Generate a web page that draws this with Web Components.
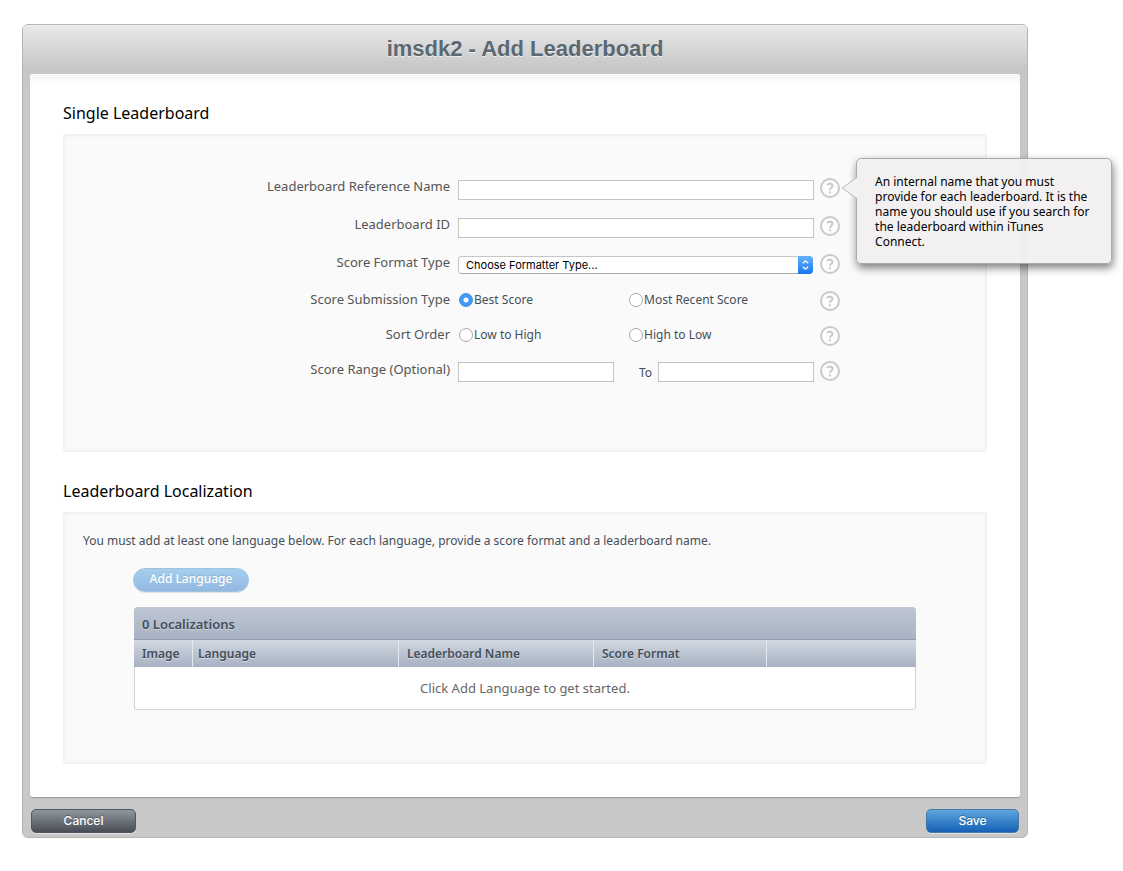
<!DOCTYPE html>
<html lang="en">
<head>
<meta charset="utf-8">
<meta name="viewport" content="width=device-width, initial-scale=1">
<title>imsdk2 - Add Leaderboard</title>
<style>
body { margin: 0; padding: 24px 95px 32px 22px; background: #fff; color: #444f5a; font: 12px/16px "Noto Sans", sans-serif; }
</style>
</head>
<body>
<lb-window>
  <span slot="title">imsdk2 - Add Leaderboard</span>
  <lb-section>
    <span slot="heading">Single Leaderboard</span>
    <lb-form></lb-form>
  </lb-section>
  <lb-section>
    <span slot="heading">Leaderboard Localization</span>
    <lb-localizations></lb-localizations>
  </lb-section>
  <lb-button slot="actions">Cancel</lb-button>
  <lb-button slot="actions" primary>Save</lb-button>
</lb-window>
<script>
const define = (name, html) => customElements.define(name, class extends HTMLElement {
  constructor() {
    super();
    const template = document.createElement('template');
    template.innerHTML = html;
    this.attachShadow({ mode: 'open' }).append(template.content.cloneNode(true));
  }
});

define('lb-window', `
<style>
:host { display: block; border: 1px solid #b5b5b5; border-radius: 6px; background: #c8c8c8; }
header { padding: 11px 0 12px; border-radius: 5px 5px 0 0; background: linear-gradient(#e9e9e9, #c6c6c6 90%); box-shadow: inset 0 1px #f2f2f2; }
h1 { margin: 0; text-align: center; font: bold 22px/26px "Liberation Sans", sans-serif; color: #5a6872; text-shadow: 0 1px #eee; }
main { margin: 0 7px; padding: 0 33px 33px; border-radius: 3px; background: linear-gradient(#f5f5f5, #fff 12px); box-shadow: 0 1px 1px #999, inset 0 1px #fff; }
footer { display: flex; justify-content: space-between; padding: 12px 8px 4px; }
</style>
<header><h1><slot name="title"></slot></h1></header>
<main><slot></slot></main>
<footer><slot name="actions"></slot></footer>`);

define('lb-section', `
<style>
:host { display: block; }
h2 { margin: 0; padding: 28px 0 10px; font-size: 16px; line-height: 22px; font-weight: 400; color: #000; }
section { border: 1px solid #f0f0f0; border-radius: 3px; background: #fafafa; box-shadow: inset 0 0 4px #eee; }
</style>
<h2><slot name="heading"></slot></h2>
<section><slot></slot></section>`);

define('lb-button', `
<style>
:host { display: block; }
button { display: block; width: 105px; height: 24px; padding: 0; border: 1px solid #50565e; border-radius: 5px; background: linear-gradient(#91979e, #484d55); box-shadow: 0 1px #dfe2e5; color: #fff; font: 500 12px/22px Inter, sans-serif; text-shadow: 0 -1px rgba(0,0,0,.3); }
:host([primary]) button { width: 93px; border-color: #4878a4; background: linear-gradient(#5fa6df, #1560b5); }
</style>
<button type="button"><slot></slot></button>`);

define('lb-help', `
<style>
:host { display: block; position: relative; width: 20px; height: 20px; }
button { display: block; width: 20px; height: 20px; padding: 0; border: 0; background: none; }
svg { display: block; }
</style>
<button type="button" aria-label="Help"><svg width="20" height="20" viewBox="0 0 20 20" fill="none" stroke="#c9c9cb" stroke-width="2"><circle cx="10" cy="10" r="9" fill="#fdfdfd"/><path d="M7.1 7C8.1 5.2 12.5 5.2 12.5 7.9C12.5 9.8 9.9 9.7 9.9 12"/><path d="M9.9 13.3V15.3"/></svg></button>
<slot></slot>`);

define('lb-tooltip', `
<style>
:host { position: absolute; z-index: 1; left: 36px; top: -20px; box-sizing: border-box; width: 256px; padding: 15px 18px 14px 18px; border: 1px solid #aaa; border-radius: 5px; background: rgba(241,239,240,.96); box-shadow: 1px 4px 8px rgba(0,0,0,.5); color: #000; line-height: 15px; }
svg { position: absolute; left: -16px; top: 18px; }
</style>
<svg width="16" height="22" viewBox="0 0 16 22"><path d="M16 0.5L1 11L16 21.5" fill="#f3f2f2" stroke="#bbb"/></svg>
<slot></slot>`);

define('lb-form', `
<style>
:host { display: block; }
form { display: grid; grid-template-columns: minmax(0,27fr) 356px 26px minmax(0,10fr); grid-template-rows: repeat(3,38px) repeat(3,35px); align-items: center; padding: 34px 0 63px; }
.name { grid-column: 1; padding: 0 8px 4px 0; text-align: right; font-size: 13px; line-height: 18px; color: #555; }
input[type=text] { box-sizing: border-box; width: 100%; height: 20px; margin: 3px 0 0; padding: 0 6px; border: 1px solid #c4c4c4; border-radius: 0; background: #fff; font: inherit; }
lb-help { grid-column: 3; margin-left: 6px; }
.select { position: relative; margin-right: 1px; }
select { display: block; appearance: none; box-sizing: border-box; width: 100%; height: 18px; margin: 2px 0 0; padding: 0 24px 0 7px; border: 1px solid #c6c6c6; border-bottom-color: #aaa; border-radius: 4px; background: #fff; color: #000; font: 11px/16px Inter, sans-serif; }
.select svg { position: absolute; right: 0; top: 0; pointer-events: none; }
.pair { display: grid; grid-template-columns: 170px 1fr; padding-bottom: 2px; }
.pair label { display: flex; align-items: center; }
input[type=radio] { appearance: none; box-sizing: border-box; width: 14px; height: 14px; margin: 0 1px; border: 1px solid #aaa; border-radius: 50%; background: #fff; }
input[type=radio]:checked { border-color: #3b8fe8; background: radial-gradient(circle, #fff 2px, #429af5 3px); }
.range { display: grid; grid-template-columns: 156px 44px 156px; align-items: center; }
.range label { padding: 5px 6px 0 0; text-align: right; }
</style>
<form>
  <label class="name" for="ref">Leaderboard Reference Name</label>
  <input type="text" id="ref">
  <lb-help><lb-tooltip>An internal name that you must provide for each leaderboard. It is the name you should use if you search for the leaderboard within iTunes Connect.</lb-tooltip></lb-help>
  <label class="name" for="id">Leaderboard ID</label>
  <input type="text" id="id">
  <lb-help></lb-help>
  <label class="name" for="format">Score Format Type</label>
  <div class="select">
    <select id="format"><option>Choose Formatter Type...</option></select>
    <svg width="15" height="20" viewBox="0 0 15 20"><defs><linearGradient id="g" x2="0" y2="1"><stop stop-color="#68b0fa"/><stop offset="1" stop-color="#1678f5"/></linearGradient></defs><path d="M0 2H11Q15 2 15 6V16Q15 20 11 20H0Z" fill="url(#g)"/><path d="M4.8 9.3L7.5 6.8L10.2 9.3M4.8 12.7L7.5 15.2L10.2 12.7" fill="none" stroke="#fff" stroke-width="1.3"/></svg>
  </div>
  <lb-help></lb-help>
  <span class="name" id="submission">Score Submission Type</span>
  <div class="pair" role="radiogroup" aria-labelledby="submission">
    <label><input type="radio" name="submission" checked>Best Score</label>
    <label><input type="radio" name="submission">Most Recent Score</label>
  </div>
  <lb-help></lb-help>
  <span class="name" id="order">Sort Order</span>
  <div class="pair" role="radiogroup" aria-labelledby="order">
    <label><input type="radio" name="order">Low to High</label>
    <label><input type="radio" name="order">High to Low</label>
  </div>
  <lb-help></lb-help>
  <label class="name" for="from">Score Range (Optional)</label>
  <div class="range">
    <input type="text" id="from">
    <label for="to">To</label>
    <input type="text" id="to">
  </div>
  <lb-help></lb-help>
</form>`);

define('lb-localizations', `
<style>
:host { display: block; padding: 20px 70px 53px; }
p { margin: 0 -51px 19px; }
button { display: block; width: 116px; height: 24px; margin: 0 0 15px -1px; padding: 0 0 2px; border: 1px solid #9fc3dc; border-radius: 12px; background: linear-gradient(#a4cfee, #93b8e2); box-shadow: 0 1px #dde4ea; color: #fff; font: 500 12px/20px "Noto Sans", sans-serif; text-shadow: 0 -1px #8fb0cc; }
table { width: 100%; table-layout: fixed; border-collapse: separate; border-spacing: 0; border-radius: 3px; overflow: hidden; color: #444f5a; }
caption { box-sizing: border-box; height: 33px; padding: 0 8px; border-bottom: 1px solid #929dac; border-radius: 3px 3px 0 0; background: linear-gradient(#bec6d3, #a9b3c3); text-align: left; font-weight: 600; font-size: 13px; line-height: 34px; text-shadow: 0 1px #c8d0da; }
th { height: 27px; padding: 0 8px; border-right: 1px solid #e3e8ee; background: linear-gradient(#d0d8e1, #a8b1c2); text-align: left; font-weight: 600; line-height: 26px; text-shadow: 0 1px #d4dbe3; }
th:nth-child(2) { padding-left: 5px; }
th:last-child { border: 0; }
td { height: 42px; padding: 0; border: 1px solid #d0d3da; border-top: 0; border-radius: 0 0 3px 3px; background: #fff; text-align: center; font-size: 13px; line-height: 42px; color: #666; }
</style>
<p>You must add at least one language below. For each language, provide a score format and a leaderboard name.</p>
<button type="button">Add Language</button>
<table>
  <caption>0 Localizations</caption>
  <colgroup><col style="width:59px"><col style="width:206px"><col style="width:195px"><col style="width:173px"><col></colgroup>
  <thead><tr><th scope="col">Image</th><th scope="col">Language</th><th scope="col">Leaderboard Name</th><th scope="col">Score Format</th><th scope="col" aria-label="Actions"></th></tr></thead>
  <tbody><tr><td colspan="5">Click Add Language to get started.</td></tr></tbody>
</table>`);
</script>
</body>
</html>
